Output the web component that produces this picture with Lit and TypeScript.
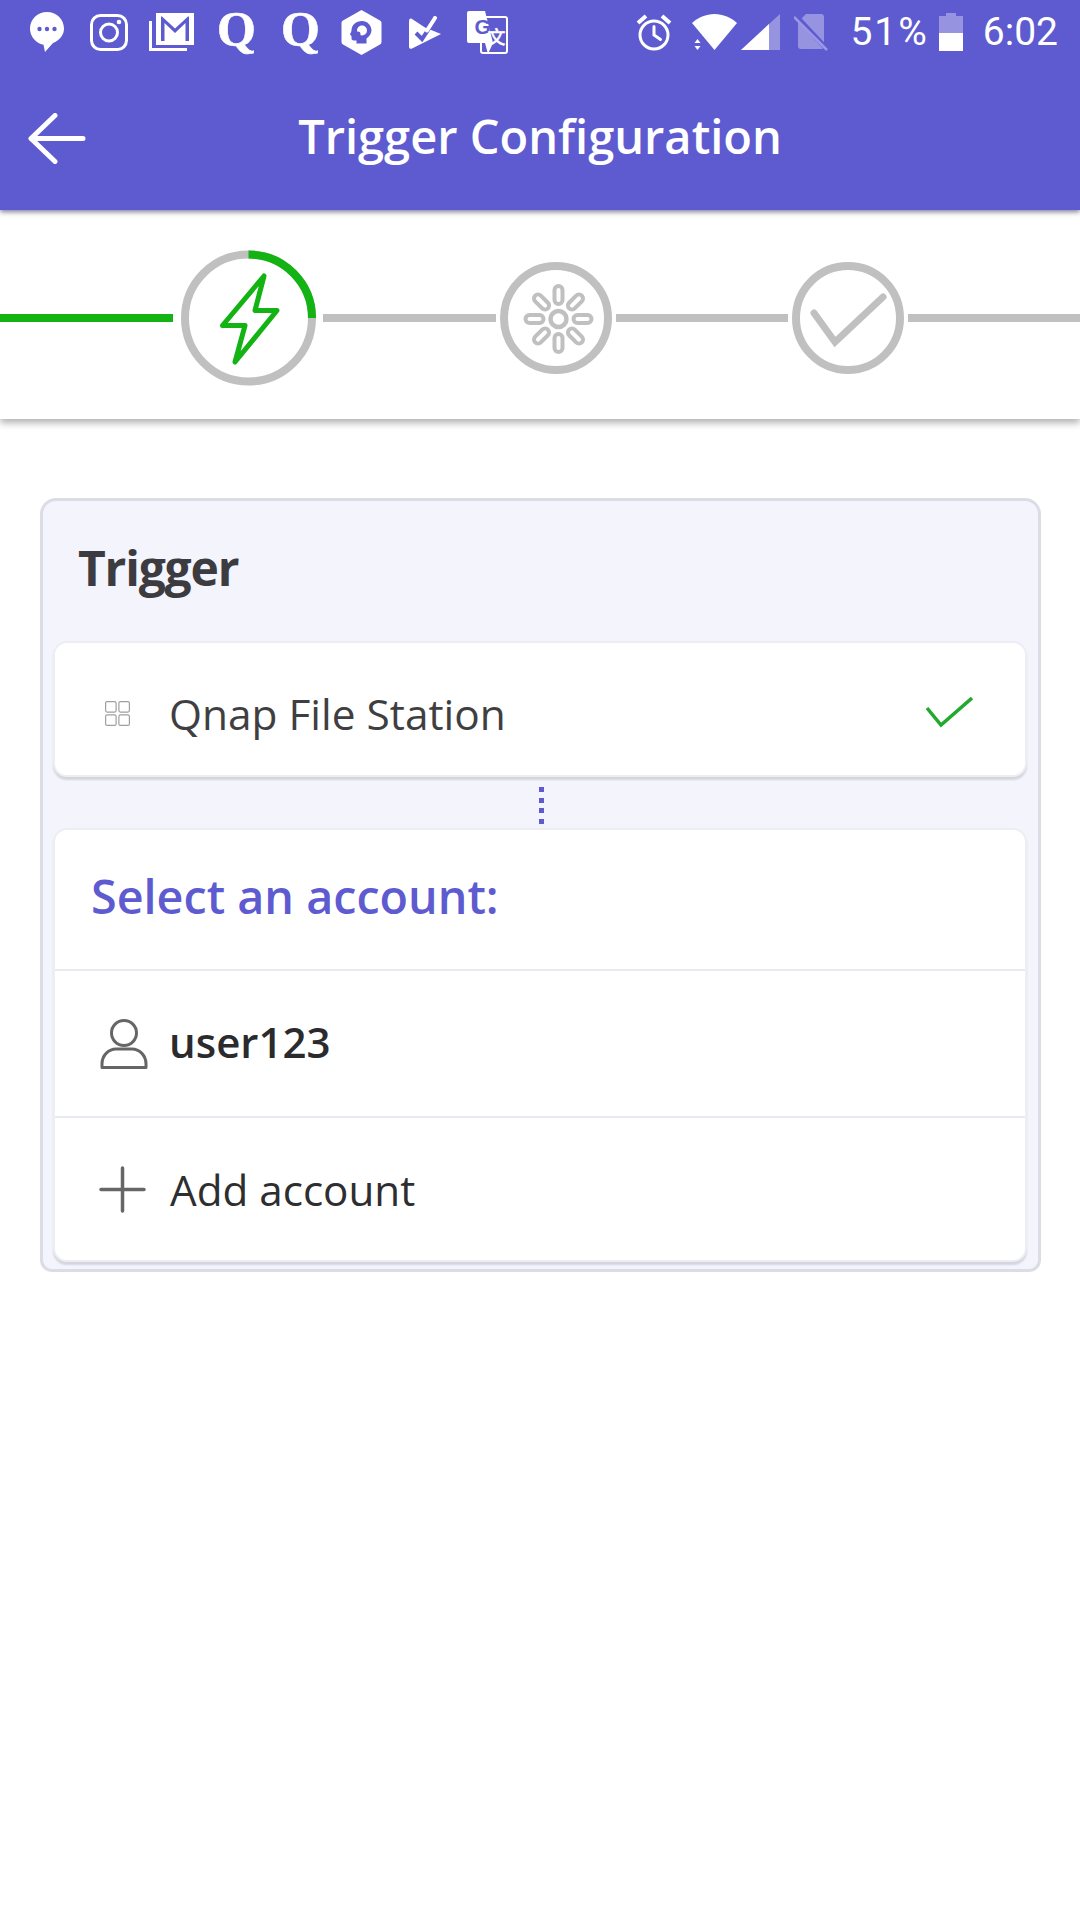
import { LitElement, html, css, svg } from "lit";
import { customElement } from "lit/decorators.js";

const PETALS = [0, 45, 90, 135, 180, 225, 270, 315];

@customElement("app-root")
export class AppRoot extends LitElement {
  static styles = css`
    :host { display: block; width: 1080px; height: 1920px; background: #fff; font-family: "Open Sans", sans-serif; overflow: hidden; }
    svg { display: block; flex: none; }
    .header { background: #5e5bd0; height: 210px; box-shadow: 0 2px 5px rgba(40,40,90,.6); position: relative; z-index: 2; }
    .status { height: 64px; display: flex; align-items: center; justify-content: space-between; padding: 0 22px 0 30px; color: #fff; }
    .group { display: flex; align-items: center; }
    .sys { font-family: Roboto, sans-serif; font-size: 39px; line-height: 40px; }
    .pct { letter-spacing: 2px; }
    .q { font-family: "Liberation Serif", serif; font-weight: 700; font-size: 50px; line-height: 34px; width: 36px; height: 40px; text-align: center; -webkit-text-stroke: .6px #fff; }
    .m26 { margin-left: 26px; } .m21 { margin-left: 21px; } .m23 { margin-left: 23px; } .m28 { margin-left: 28px; } .m24 { margin-left: 24px; } .m27 { margin-left: 27px; } .m26b { margin-left: 26px; }
    .m4 { margin-left: 4px; } .m14 { margin-left: 14px; } .m22 { margin-left: 22px; } .m10 { margin-left: 10px; } .m20 { margin-left: 20px; }
    .bar { height: 146px; box-sizing: border-box; padding-bottom: 2px; display: flex; align-items: center; justify-content: center; position: relative; }
    .back { position: absolute; left: 28px; top: 49px; }
    .title { color: #fff; font-size: 47px; font-weight: 600; margin: 0; line-height: 60px; }

    .stepper { height: 209px; box-sizing: border-box; padding-top: 7px; display: flex; align-items: center; background: #fff; box-shadow: 0 4px 7px rgba(0,0,0,.3); position: relative; z-index: 1; }
    .line { height: 8px; background: #c0c0c0; flex: none; }
    .line.on { background: #12b312; }
    .w173 { width: 173px; } .w172 { width: 172px; }
    .g8 { margin-left: 8px; } .g7 { margin-left: 7px; } .g4 { margin-left: 4px; }

    .outer { margin: 79px 39px 0 40px; box-sizing: border-box; height: 774px; border: 3px solid #dcdce6; border-radius: 16px 16px 12px 12px; background: #f4f4fd; padding: 0 11px 0 10px; }
    .outer-title { height: 140px; margin: 0; padding: 0 0 8px 25px; box-sizing: border-box; display: flex; align-items: center; font-size: 48px; font-weight: 700; color: #3c3c40; letter-spacing: -1.2px; }
    .card { background: #fff; border: 2px solid #edeef3; border-radius: 14px; box-shadow: 0 3px 2px rgba(0,0,0,.13); }
    .app-row { height: 132px; display: flex; align-items: center; position: relative; }
    .app-name { font-size: 42.4px; color: #3f3f42; margin-left: 39px; padding-top: 8px; line-height: 57px; }
    .grid-ic { margin-left: 50px; margin-top: 8px; }
    .ok { position: absolute; right: 52px; top: 54px; }
    .dots { height: 51px; display: flex; flex-direction: column; align-items: center; padding: 10px 0 0 2px; box-sizing: border-box; gap: 5.5px; }
    .dots i { display: block; width: 5px; height: 5px; background: #5e5bd0; }
    .acct-head { height: 139px; display: flex; align-items: center; padding: 0 0 7px 36px; font-size: 46.7px; font-weight: 600; color: #5e5bd0; box-sizing: border-box; }
    .row { height: 145px; border-top: 2px solid #e9e9f0; display: flex; align-items: center; }
    .row.last { height: 142px; }
    .user-ic { margin-left: 45px; }
    .plus-ic { margin-left: 44px; }
    .user-name { font-size: 42px; font-weight: 600; color: #2b2b2e; margin-left: 21px; padding-bottom: 4px; }
    .add { font-size: 42.2px; color: #2e2e30; margin-left: 24px; }
  `;

  private statusBar() {
    const bg = "#5e5bd0";
    return html`<div class="status">
      <div class="group">
        <svg width="34" height="40" viewBox="0 0 34 40"><path fill="#fff" d="M17 0C7.6 0 0 7.4 0 16.5c0 8 5.8 14.7 13.5 16.2L15 40l8-9C29.500 28.500 34 23 34 16.500 34 7.400 26.400 0 17 0z"/><g fill="${bg}"><circle cx="9.500" cy="17" r="2.200"/><circle cx="17" cy="17" r="2.200"/><circle cx="24.500" cy="17" r="2.200"/></g></svg>
        <svg class="m26" width="38" height="37" viewBox="0 0 38 37" fill="none" stroke="#fff"><rect x="1.500" y="1.500" width="35" height="34" rx="9" stroke-width="3"/><circle cx="19" cy="18.500" r="8.500" stroke-width="3"/><circle cx="29" cy="8" r="2.300" fill="#fff" stroke="none"/></svg>
        <svg class="m21" width="45" height="38" viewBox="0 0 45 38"><path fill="none" stroke="#fff" stroke-width="3" d="M1.500 8v28.500H38"/><path fill="#fff" fill-rule="evenodd" d="M7 0h38v32H7zM13 3.500h-1V28h3.500V10l10.500 10 10.500-10v18H40V3.500h-1L26 15.500z"/></svg>
        <div class="q m23">Q</div>
        <div class="q m28">Q</div>
        <svg class="m24" width="41" height="45" viewBox="0 0 41 45"><path fill="#fff" d="M20.500 0l18.500 10.500a3 3 0 011.500 2.600v18.800a3 3 0 01-1.500 2.600L20.500 45 2 34.500a3 3 0 01-1.500-2.600V13.100A3 3 0 012 10.500z"/><path fill="${bg}" d="M21 11c-6 0-10.500 4-10.500 9.500 0 1.500-1.500 3-1.500 4 0 .8 1.500 1 1.500 1.500v2.500c0 1.500 1.500 2 3 2h2v3h10v-5c3-2 5-5 5-8.500C30 15 26.500 11 21 11z"/><circle cx="21" cy="20.500" r="5" fill="#fff"/><circle cx="17" cy="24" r="2.500" fill="${bg}"/></svg>
        <svg class="m27" width="32" height="33" viewBox="0 0 32 33"><path fill="#fff" d="M0 5c0-2 1.500-3 3-2l13 8.500L32 18 3 32.500c-1.500.8-3 0-3-2z"/><path fill="none" stroke="${bg}" stroke-width="4" d="M7 17l6 6 10-15"/><path fill="none" stroke="#fff" stroke-width="4" stroke-linecap="round" d="M18 14.500L26 2"/></svg>
        <svg class="m26b" width="41" height="43" viewBox="0 0 41 43"><rect x="14" y="6" width="26" height="36" rx="2" fill="${bg}" stroke="#fff" stroke-width="2"/><path fill="#fff" d="M2 0h16l8 32H2a2 2 0 01-2-2V2a2 2 0 012-2z"/><path fill="#fff" d="M18 32h8l-5 11z"/><text x="7.500" y="23" font-family="'Liberation Sans',sans-serif" font-weight="700" font-size="21" fill="${bg}">G</text><text x="20.500" y="33" font-family="'Noto Sans CJK SC',sans-serif" font-weight="500" font-size="18" fill="#fff" stroke="#fff" stroke-width=".3">文</text></svg>
      </div>
      <div class="group">
        <svg width="36" height="37" viewBox="0 0 36 37" fill="none" stroke="#fff"><circle cx="18" cy="21" r="14" stroke-width="3"/><path stroke-width="3" stroke-linecap="round" d="M18 12.500V21l6.500 4.500"/><path stroke-width="4" d="M2 9L10 2M34 9L26 2"/></svg>
        <svg class="m20" width="45" height="36" viewBox="0 0 45 36"><path fill="#fff" d="M0 9C6 3.500 14 0 22.500 0S39 3.500 45 9L22.500 36z"/><path fill="${bg}" d="M0 23h10l3 16H0z"/><path fill="#fff" d="M5.500 25l3 4h-6zM5.500 36l-3-4h6z"/></svg>
        <svg class="m4" width="39" height="36" viewBox="0 0 39 36"><path fill="#fff" fill-opacity=".35" d="M0 36L39 0v36z"/><path fill="#fff" d="M0 36L28 10v26z"/></svg>
        <svg class="m14" width="34" height="37" viewBox="0 0 34 37"><path fill="#fff" fill-opacity=".35" d="M12 0h15a3 3 0 013 3v29a3 3 0 01-3 3H7a3 3 0 01-3-3V8z"/><path fill="none" stroke="${bg}" stroke-width="5" d="M1 1l32 34"/><path fill="none" stroke="#9b99e5" stroke-width="2.500" d="M0 3l33 33"/></svg>
        <span class="sys pct m22">51%</span>
        <svg class="m10" width="24" height="38" viewBox="0 0 24 38"><path fill="#fff" fill-opacity=".35" d="M7 0h10v3h7v17H0V3h7z"/><rect y="20" width="24" height="18" fill="#fff"/></svg>
        <span class="sys m20">6:02</span>
      </div>
    </div>`;
  }

  private stepper() {
    return html`<div class="stepper">
      <div class="line on w173"></div>
      <svg class="g8" width="135" height="136" viewBox="0 0 135 136" fill="none">
        <circle cx="67.500" cy="68" r="63.500" stroke="#c0c0c0" stroke-width="8"/>
        <path d="M67.500 4.500A63.500 63.500 0 01131 68" stroke="#12b312" stroke-width="8"/>
        <path d="M83 26L74 60.500H96L54 112 64 75.500H41.500z" stroke="#12b312" stroke-width="5" stroke-linejoin="round"/>
      </svg>
      <div class="line w173 g7"></div>
      <svg class="g4" width="112" height="112" viewBox="0 0 112 112" fill="none" stroke="#c0c0c0">
        <circle cx="56" cy="56" r="52" stroke-width="8"/>
        <circle cx="58.500" cy="57" r="8" stroke-width="4.500"/>
        ${PETALS.map(a => svg`<rect x="54.500" y="24" width="8" height="18" rx="4" stroke-width="4" transform="rotate(${a} 58.500 57)"/>`)}
      </svg>
      <div class="line w172 g4"></div>
      <svg class="g4" width="112" height="112" viewBox="0 0 112 112" fill="none" stroke="#c0c0c0">
        <circle cx="56" cy="56" r="52" stroke-width="8"/>
        <path d="M22 51L43 80 91 35" stroke-width="7" stroke-linejoin="miter" stroke-linecap="round"/>
      </svg>
      <div class="line w172 g4"></div>
    </div>`;
  }

  render() {
    return html`
      <div class="header">
        ${this.statusBar()}
        <div class="bar">
          <svg class="back" width="58" height="51" viewBox="0 0 58 51" fill="none" stroke="#fff" stroke-width="5" stroke-linecap="round" stroke-linejoin="round"><path d="M55 25.500H3M27 2.500L3 25.500l24 23"/></svg>
          <h1 class="title">Trigger Configuration</h1>
        </div>
      </div>
      ${this.stepper()}
      <section class="outer">
        <h2 class="outer-title">Trigger</h2>
        <div class="card app-row">
          <svg class="grid-ic" width="25" height="25" viewBox="0 0 25 25" fill="none" stroke="#a0a0a0" stroke-width="1.200"><rect x=".6" y=".6" width="10.500" height="10.500" rx="1.500"/><rect x="13.900" y=".6" width="10.500" height="10.500" rx="1.500"/><rect x=".6" y="13.900" width="10.500" height="10.500" rx="1.500"/><rect x="13.900" y="13.900" width="10.500" height="10.500" rx="1.500"/></svg>
          <span class="app-name">Qnap File Station</span>
          <svg class="ok" width="47" height="31" viewBox="0 0 47 31" fill="none" stroke="#22a92e" stroke-width="3.500"><path d="M1 11l14 17L46 1"/></svg>
        </div>
        <div class="dots"><i></i><i></i><i></i><i></i></div>
        <div class="card">
          <div class="acct-head">Select an account:</div>
          <div class="row">
            <svg class="user-ic" width="48" height="50" viewBox="0 0 48 50" fill="none" stroke="#666" stroke-width="3"><circle cx="24" cy="14" r="12.500"/><path d="M2 48.500V45c0-9 7-15 14-15h16c7 0 14 6 14 15v3.500z" stroke-linejoin="round"/></svg>
            <span class="user-name">user123</span>
          </div>
          <div class="row last">
            <svg class="plus-ic" width="47" height="47" viewBox="0 0 47 47" fill="none" stroke="#666" stroke-width="3.500" stroke-linecap="round"><path d="M23.500 2v43M2 23.500h43"/></svg>
            <span class="add">Add account</span>
          </div>
        </div>
      </section>
    `;
  }
}
